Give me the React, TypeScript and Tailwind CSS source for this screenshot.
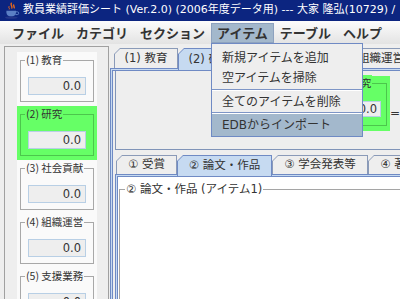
const base = "font-['DejaVu_Sans','Noto_Sans_CJK_JP',sans-serif]";

const menus = ["ファイル", "カテゴリ", "セクション", "アイテム", "テーブル", "ヘルプ"];

const sections = [
  {label: "(1) 教育", green: false},
  {label: "(2) 研究", green: true},
  {label: "(3) 社会貢献", green: false},
  {label: "(4) 組織運営", green: false},
  {label: "(5) 支援業務", green: false}
];

function JavaIcon() {
  return (
    <svg width="16" height="17" viewBox="0 0 16 17" className="shrink-0">
      <path d="M7.6 0.8c-2.2 2.2 1.8 3.2 0 5.8M10 2.6c-1.3 1.4 1.1 2.1 0 3.8" stroke="#e8681a" strokeWidth="1.4" fill="none" />
      <path d="M5.2 4.2c-1.5 1.2 1 2.1 0 3.2" stroke="#e8681a" strokeWidth="1" fill="none" />
      <path d="M2.4 8.8h9.6v1.6c0 2.6-2.2 4-4.8 4s-4.8-1.4-4.8-4z" fill="#5b7fc4" />
      <path d="M12 9.8h1.3a1.4 1.4 0 0 1 0 2.8h-1.9" stroke="#5b7fc4" strokeWidth="1" fill="none" />
      <ellipse cx="7.3" cy="15.6" rx="6.4" ry="1.2" fill="#25378a" />
    </svg>
  );
}

interface ScoreBoxProps {
  label: string;
  green: boolean;
  labelBg: string;
}

function ScoreBox({label, green, labelBg}: ScoreBoxProps) {
  return (
    <div className={green ? "w-[80px] h-[54px] shrink-0 pt-[8px] pl-[3px] bg-[#66ff66]" : "w-[80px] h-[54px] shrink-0 pt-[8px] pl-[3px]"}>
      <div className={green ? "relative w-[74px] h-[42px] border border-[#4cc64c]" : "relative w-[74px] h-[42px] border border-[#a8a8a8]"}>
        <span className={`absolute -top-[9px] left-[4px] px-[1px] text-[10.5px] leading-[16px] whitespace-nowrap font-['Noto_Sans_CJK_JP',sans-serif] ${green ? "bg-[#66ff66]" : labelBg}`}>
          {label}
        </span>
        <div className="mt-[16px] ml-[7px] w-[58px] h-[18px] border border-[#b8cfe5] bg-[#eeeeee] text-right pr-[4px] text-[11.5px] leading-[16px]">
          0.0
        </div>
      </div>
    </div>
  );
}

interface TabProps {
  label: string;
  width: string;
  selected?: boolean;
  tall: string;
}

function Tab({label, width, selected, tall}: TabProps) {
  return (
    <div
      className={`${width} ${tall} shrink-0 pt-[1px] px-[1px] ${selected ? "relative z-10 -mb-[2px] bg-[#6f8ac4]" : "bg-[#8a9ab8]"} [clip-path:polygon(6px_0,100%_0,100%_100%,0_100%,0_6px)]`}
    >
      <div
        className={`h-full flex items-center justify-center text-[11.5px] whitespace-nowrap ${selected ? "bg-[#c6daf1]" : "bg-[#eeeeee]"} [clip-path:polygon(5px_0,100%_0,100%_100%,0_100%,0_5px)]`}
      >
        {label}
      </div>
    </div>
  );
}

export default function App() {
  return (
    <div className={`relative w-[400px] h-[299px] overflow-hidden bg-[#eeeeee] flex flex-col text-[#333333] ${base}`}>
      <div className="h-[21px] shrink-0 bg-[#0c2580] flex items-center pl-[4px] gap-[3px] text-white text-[11px] whitespace-nowrap">
        <JavaIcon />
        <span>教員業績評価シート (Ver.2.0) (2006年度データ用) --- 大家 隆弘(10729) /</span>
      </div>

      <div className="h-[23px] shrink-0 bg-gradient-to-b from-[#fcfcfc] to-[#e3e3e3] flex pl-[6px] pt-[2px] pb-[1px]">
        {menus.map((m) => (
          <div
            key={m}
            className={
              m === "アイテム"
                ? "px-[5px] flex items-center border border-[#8da2bf] bg-[#a3b8cc] text-[13px] font-bold font-['Noto_Sans_CJK_JP',sans-serif]"
                : "px-[5px] flex items-center border border-transparent text-[13px] font-bold font-['Noto_Sans_CJK_JP',sans-serif]"
            }
          >
            {m}
          </div>
        ))}
      </div>

      <div className="flex-1 min-h-0 flex overflow-hidden">
        <div className="ml-[4px] mt-[2px] w-[105px] shrink-0 border-l border-t border-r border-[#a0a0a0] pl-[12px] pt-[5px]">
          <div className="w-[80px] bg-[#fafafa] flex flex-col">
            {sections.map((s) => (
              <ScoreBox key={s.label} label={s.label} green={s.green} labelBg="bg-[#fafafa]" />
            ))}
          </div>
        </div>

        <div className="flex-1 min-w-0 flex flex-col overflow-hidden">
          <div className="h-[24px] shrink-0 flex items-end pl-[5px]">
            <Tab label="(1) 教育" width="w-[64px]" tall="h-[20px]" />
            <Tab label="(2) 研究" width="w-[64px]" tall="h-[22px]" selected />
            <Tab label="(3) 社会貢献" width="w-[86px]" tall="h-[20px]" />
            <Tab label="(4) 組織運営" width="w-[86px]" tall="h-[20px]" />
          </div>

          <div className="flex-1 ml-[1px] border-l border-t border-[#6f8ac4] bg-[#c6daf1] pl-[1px] pt-[1px] w-[320px]">
            <div className="h-full border-l border-t border-[#6f8ac4] bg-[#eeeeee] flex flex-col">
              <div className="ml-[2px] h-[79px] shrink-0 border-l border-b border-[#8094b8] flex items-start pt-[5px]">
                <div className="ml-[121px]">
                  <ScoreBox label="(1) 教育" green={false} labelBg="bg-[#eeeeee]" />
                </div>
                <div className="w-[10px] mt-[30px] text-center text-[12px]">+</div>
                <div className="w-[63px] h-[55px] shrink-0 pt-[7px] pl-[3px] bg-[#66ff66]">
                  <div className="relative w-[57px] h-[43px] border border-[#4cc64c]">
                    <span className="absolute -top-[9px] left-[3px] px-[1px] bg-[#66ff66] text-[10.5px] leading-[16px] whitespace-nowrap font-['Noto_Sans_CJK_JP',sans-serif]">
                      (2) 研究
                    </span>
                    <div className="mt-[17px] ml-[6px] w-[44px] h-[16px] border border-[#b8cfe5] bg-[#eeeeee] text-right pr-[3px] text-[11.5px] leading-[14px]">
                      0.0
                    </div>
                  </div>
                </div>
                <div className="w-[10px] mt-[28px] text-center text-[12px]">=</div>
              </div>

              <div className="flex-1 ml-[2px] mt-[5px] flex flex-col">
                <div className="h-[19px] shrink-0 flex items-end pl-[1px]">
                  <Tab label="① 受賞" width="w-[61px]" tall="h-[19px]" />
                  <Tab label="② 論文・作品" width="w-[95px]" tall="h-[21px]" selected />
                  <Tab label="③ 学会発表等" width="w-[96px]" tall="h-[19px]" />
                  <Tab label="④ 著書・訳書" width="w-[96px]" tall="h-[19px]" />
                </div>
                <div className="flex-1 border-l border-t border-[#6f8ac4] bg-[#c6daf1] pl-[1px] pt-[1px]">
                  <div className="h-full border-l border-t border-[#6f8ac4] bg-white pl-[1px] pt-[12px]">
                    <div className="relative h-[200px] border border-[#a5a5a5]">
                      <span className="absolute -top-[9px] left-[5px] px-[1px] bg-white text-[11.5px] leading-[16px] whitespace-nowrap">
                        ② 論文・作品 (アイテム1)
                      </span>
                    </div>
                  </div>
                </div>
              </div>
            </div>
          </div>
        </div>
      </div>

      <div className="absolute left-[211px] top-[43px] w-[152px] border border-[#6f8ac4] bg-[#eeeeee] pt-[4px] text-[12px] font-['DejaVu_Sans','Noto_Sans_CJK_JP',sans-serif] z-20">
        <div className="h-[20px] flex items-center pl-[10px]">新規アイテムを追加</div>
        <div className="h-[20px] flex items-center pl-[10px]">空アイテムを掃除</div>
        <div className="h-[3px] flex flex-col justify-center">
          <div className="border-t border-[#7d95c6] border-b border-b-white" />
        </div>
        <div className="h-[21px] flex items-center pl-[10px]">全てのアイテムを削除</div>
        <div className="h-[2px] border-t border-[#7d95c6] border-b border-b-white" />
        <div className="h-[22px] flex items-center pl-[10px] bg-[#a3b8cc]">EDBからインポート</div>
      </div>
    </div>
  );
}
